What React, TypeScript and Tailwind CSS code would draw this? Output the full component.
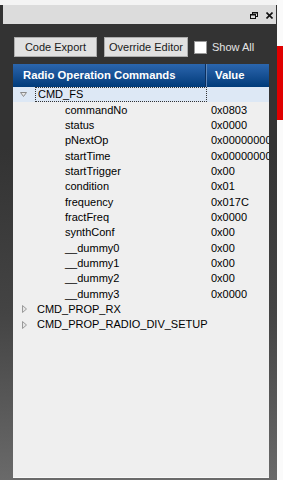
import React from "react";

const FIELDS: [string, string][] = [
  ["commandNo", "0x0803"],
  ["status", "0x0000"],
  ["pNextOp", "0x00000000"],
  ["startTime", "0x00000000"],
  ["startTrigger", "0x00"],
  ["condition", "0x01"],
  ["frequency", "0x017C"],
  ["fractFreq", "0x0000"],
  ["synthConf", "0x00"],
  ["__dummy0", "0x00"],
  ["__dummy1", "0x00"],
  ["__dummy2", "0x00"],
  ["__dummy3", "0x0000"],
];

function RestoreIcon() {
  return (
    <svg width="8" height="7" viewBox="0 0 8 7" className="block">
      <rect x="2.5" y="0.5" width="5" height="4" fill="none" stroke="#111" />
      <rect x="2" y="0" width="6" height="1.5" fill="#111" />
      <rect x="0.5" y="2.5" width="5" height="4" fill="#dcdcdc" stroke="#111" />
      <rect x="0" y="2" width="6" height="1.5" fill="#111" />
    </svg>
  );
}

function CloseIcon() {
  return (
    <svg width="7" height="7" viewBox="0 0 7 7" className="block">
      <path d="M0.5 0.5 L6.5 6.5 M6.5 0.5 L0.5 6.5" stroke="#111" strokeWidth="1.6" />
    </svg>
  );
}

function Expanded() {
  return (
    <svg width="7" height="5" viewBox="0 0 7 5" className="block">
      <path d="M0.5 0.5 H6.5 L3.5 4.5 Z" fill="#e6e6e6" stroke="#8a8a8a" />
    </svg>
  );
}

function Collapsed() {
  return (
    <svg width="5" height="8" viewBox="0 0 5 8" className="block">
      <path d="M0.5 0.5 V7.5 L4.5 4 Z" fill="#e6e6e6" stroke="#9a9a9a" />
    </svg>
  );
}

export default function App() {
  return (
    <div className="flex h-[480px] w-[283px] overflow-hidden bg-[#f4f4f4] font-['Liberation_Sans',Arial,sans-serif] text-[11px] text-black">
      <div className="mt-[5px] flex w-[277px] flex-col bg-linear-to-b from-[#333333] from-30% via-[#444444] via-65% to-[#6a6a6a]">
        <div className="ml-[3px] mr-px flex h-[19px] items-center justify-end gap-[8px] bg-[#dcdcdc] pr-[3px] pt-px">
          <RestoreIcon />
          <CloseIcon />
        </div>

        <div className="ml-[14px] mt-[13px] flex h-[20px] items-center">
          <button className="h-[20px] w-[83px] border border-[#adadad] bg-[#e1e1e1] text-[11px] text-[#1a1a1a]">
            Code Export
          </button>
          <button className="ml-[7px] h-[20px] w-[84px] border border-[#adadad] bg-[#e1e1e1] text-[11px] text-[#1a1a1a]">
            Override Editor
          </button>
          <span className="ml-[6px] h-[13px] w-[13px] border border-[#999] bg-white" />
          <span className="ml-[5px] text-[11px] text-[#e4e4e4]">Show All</span>
        </div>

        <div className="mb-[2px] ml-[13px] mt-[7px] flex w-[256px] flex-1 flex-col overflow-hidden border-b border-[#f8f8f8] bg-[#efefef]">
          <div className="flex h-[23px] shrink-0 items-center bg-linear-to-b from-[#2b66ae] to-[#003b7a] text-[11.3px] font-bold text-white">
            <div className="flex h-full w-[193px] items-center border-r border-[#0b2f5e] pl-[10px]">
              Radio Operation Commands
            </div>
            <div className="flex h-full flex-1 items-center border-l border-[#5f87b8] pl-[8px]">
              Value
            </div>
          </div>

          <div className="flex h-[15.33px] shrink-0 items-center bg-[#dde8f5]">
            <div className="ml-[7px] w-[15px]">
              <Expanded />
            </div>
            <div className="flex h-full w-[172px] items-center border border-dotted border-[#333] pl-[2px]">
              CMD_FS
            </div>
          </div>

          {FIELDS.map(([name, value]) => (
            <div key={name} className="flex h-[15.33px] shrink-0 items-center whitespace-nowrap">
              <div className="w-[198px] shrink-0 pl-[52px]">{name}</div>
              <div className="shrink-0">{value}</div>
            </div>
          ))}

          {["CMD_PROP_RX", "CMD_PROP_RADIO_DIV_SETUP"].map((cmd) => (
            <div key={cmd} className="flex h-[15.33px] shrink-0 items-center">
              <div className="ml-[9px] w-[15px]">
                <Collapsed />
              </div>
              <div>{cmd}</div>
            </div>
          ))}
        </div>
      </div>

      <div className="flex flex-1 flex-col bg-[#fafafa]">
        <div className="mt-[46px] h-[74px] bg-[#e00000]" />
      </div>
    </div>
  );
}
